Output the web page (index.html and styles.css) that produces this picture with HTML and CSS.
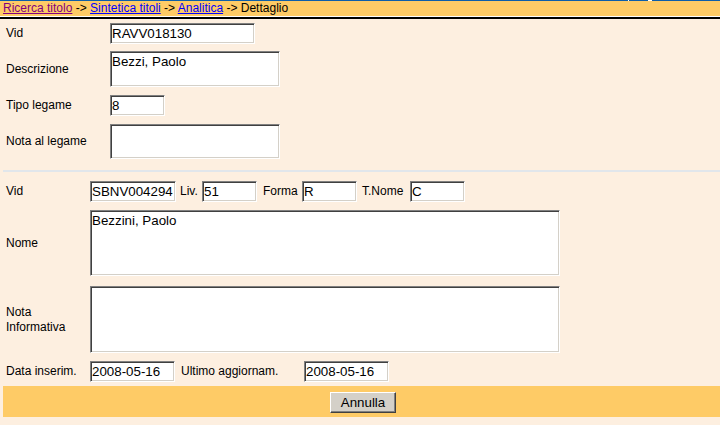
FILE: index.html
```html
<!DOCTYPE html>
<html lang="it">
<head>
<meta charset="utf-8">
<title>Dettaglio</title>
<link rel="stylesheet" href="styles.css">
</head>
<body>
<div class="topline"></div>
<div class="crumbs"><a class="visited" href="#">Ricerca titolo</a> -&gt; <a href="#">Sintetica titoli</a> -&gt; <a href="#">Analitica</a> -&gt; Dettaglio</div>
<div class="rule-white"></div>
<div class="rule-black"></div>
<main class="page">
  <section class="form1">
    <div class="row"><span class="lbl">Vid</span><input class="fld w145" value="RAVV018130"></div>
    <div class="row r-gap7"><span class="lbl">Descrizione</span><textarea class="area w170 h36">Bezzi, Paolo</textarea></div>
    <div class="row"><span class="lbl">Tipo legame</span><input class="fld w55" value="8"></div>
    <div class="row"><span class="lbl">Nota al legame</span><textarea class="area w170 h35"></textarea></div>
  </section>
  <div class="sep"></div>
  <section class="form2">
    <div class="row">
      <span class="lbl">Vid</span>
      <input class="fld w86" value="SBNV004294">
      <span class="ilbl l-liv">Liv.</span>
      <input class="fld w55" value="51">
      <span class="ilbl l-forma">Forma</span>
      <input class="fld w55" value="R">
      <span class="ilbl l-tnome">T.Nome</span>
      <input class="fld w55" value="C">
    </div>
    <div class="row"><span class="lbl">Nome</span><textarea class="area w470 h66">Bezzini, Paolo</textarea></div>
    <div class="row r-gap10"><span class="lbl">Nota Informativa</span><textarea class="area w470 h67"></textarea></div>
    <div class="row">
      <span class="lbl">Data inserim.</span>
      <input class="fld w85" value="2008-05-16">
      <span class="ilbl l-ultimo">Ultimo aggiornam.</span>
      <input class="fld w85" value="2008-05-16">
    </div>
  </section>
  <div class="actions"><button class="btn" type="button">Annulla</button></div>
</main>
</body>
</html>
```
FILE: styles.css
```css
html, body {
  margin: 0;
  padding: 0;
}
body {
  background: #fdefe0;
  font-family: "Liberation Sans", Arial, sans-serif;
  font-size: 12px;
  color: #000;
  width: 720px;
  height: 425px;
  overflow: hidden;
}
.topline {
  height: 1px;
  background: linear-gradient(to right, #0d5ea9 0, #0d5ea9 628px, #fff 628px, #fff 629px, #0d5ea9 629px, #0d5ea9 648px, #fff 648px, #fff 652px, #0d5ea9 652px);
}
.crumbs {
  height: 15px;
  line-height: 15px;
  background: #fecb66;
  padding-left: 3px;
  white-space: nowrap;
}
.crumbs a {
  color: #0000ff;
  text-decoration: underline;
}
.crumbs a.visited {
  color: #800080;
}
.rule-white {
  height: 1px;
  background: #fff;
}
.rule-black {
  height: 2px;
  background: #000;
}
.page {
  display: flex;
  flex-direction: column;
}
.form1 {
  display: flex;
  flex-direction: column;
  gap: 8px;
  padding-top: 4px;
}
.form1 .lbl {
  width: 104px;
}
.form1 .r-gap7 {
  margin-top: -1px;
}
.row {
  display: flex;
  align-items: center;
}
.lbl {
  padding-left: 6px;
  flex: none;
  line-height: 15px;
}
.sep {
  margin: 11px 0 0 3px;
  height: 2px;
  background: #e1e6eb;
}
.form2 {
  display: flex;
  flex-direction: column;
  gap: 8px;
  padding-top: 9px;
}
.form2 .lbl {
  width: 84px;
}
.form2 .r-gap10 {
  margin-top: 2px;
}
.ilbl {
  flex: none;
  line-height: 15px;
}
.l-liv { margin-left: 4px; width: 22px; }
.l-forma { margin-left: 6px; width: 39px; }
.l-tnome { margin-left: 5px; width: 48px; }
.l-ultimo { margin-left: 6px; width: 123px; }

.fld, .area {
  box-sizing: border-box;
  margin: 0;
  background: #fff;
  border: 1px solid;
  border-color: #808080 #ffffff #ffffff #808080;
  box-shadow: inset 1px 1px 0 #404040, inset -1px -1px 0 #d4d0c8;
  font-family: "Liberation Sans", Arial, sans-serif;
  font-size: 13.33px;
  color: #000;
  outline: none;
  flex: none;
}
.fld {
  height: 21px;
  padding: 0 1px;
}
.area {
  padding: 2px 1px;
  resize: none;
  overflow: hidden;
  line-height: 15px;
}
.w55 { width: 55px; }
.w85 { width: 85px; }
.w86 { width: 86px; }
.w145 { width: 145px; }
.w170 { width: 170px; }
.w470 { width: 470px; }
.h35 { height: 35px; }
.h36 { height: 36px; }
.h66 { height: 66px; }
.h67 { height: 67px; }

.actions {
  margin: 4px 0 0 3px;
  height: 31px;
  background: #fecb66;
  display: flex;
  justify-content: center;
  align-items: flex-start;
  padding-left: 3px;
}
.btn {
  margin-top: 6px;
  box-sizing: border-box;
  width: 66px;
  height: 21px;
  background: #d4d0c8;
  border: 1px solid;
  border-color: #ffffff #404040 #404040 #ffffff;
  box-shadow: inset -1px -1px 0 #808080;
  font-family: "Liberation Sans", Arial, sans-serif;
  font-size: 13.33px;
  color: #000;
  padding: 0;
}
```
